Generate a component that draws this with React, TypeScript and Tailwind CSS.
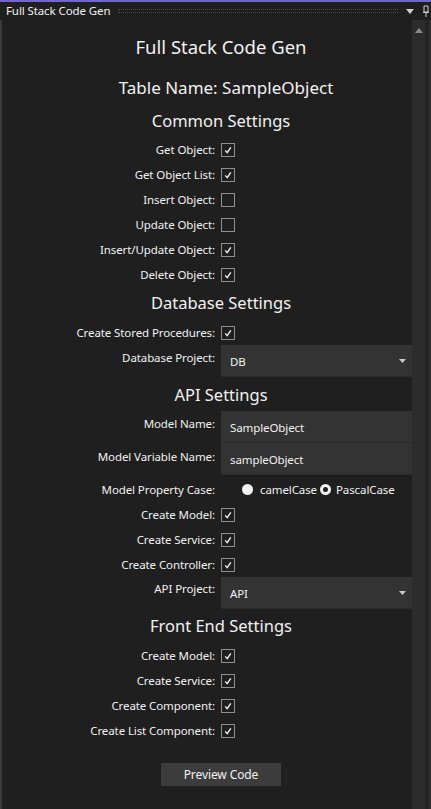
import { ReactNode } from 'react'

const font = { fontFamily: "'Noto Sans', 'Open Sans', sans-serif" }

function Check({ checked }: { checked: boolean }) {
  return (
    <span className="flex h-[14px] w-[14px] items-center justify-center border border-[#8f8f8f] bg-[#1f1f1f]">
      {checked && (
        <svg width="10" height="10" viewBox="0 0 10 10">
          <path d="M2.2 5.4 L4.2 7.6 L7.8 2.4" fill="none" stroke="#f0f0f0" strokeWidth="1.4" />
        </svg>
      )}
    </span>
  )
}

function Row({ label, children }: { label: string; children: ReactNode }) {
  return (
    <div className="grid h-[25px] grid-cols-[213px_1fr] items-center gap-[6px]">
      <span className="text-right">{label}</span>
      <div className="flex items-center">{children}</div>
    </div>
  )
}

function CheckRow({ label, checked = true }: { label: string; checked?: boolean }) {
  return (
    <Row label={label}>
      <Check checked={checked} />
    </Row>
  )
}

function Heading({ children }: { children: ReactNode }) {
  return <div className="h-[24px] pl-[28px] text-center text-[16.5px] leading-[24px] tracking-normal">{children}</div>
}

function Box({ label, value, dropdown, top = 'pt-[5px]' }: { label: string; value: string; dropdown?: boolean; top?: string }) {
  return (
    <div className="grid grid-cols-[213px_1fr] gap-[6px]">
      <span className={`text-right leading-[16px] ${top}`}>{label}</span>
      <div className="flex h-[32px] items-center justify-between border-b border-[#2a2a2a] bg-[#333333] pl-[9px] pr-[6px]">
        <span className="pt-[2px]">{value}</span>
        {dropdown && (
          <svg width="7" height="4" viewBox="0 0 7 4">
            <path d="M0 0 H7 L3.5 4 Z" fill="#c8c8c8" />
          </svg>
        )}
      </div>
    </div>
  )
}

export default function App() {
  return (
    <div
      className="flex h-[809px] w-[431px] flex-col overflow-hidden bg-[#1f1f1f] text-[11.5px] tracking-[-0.1px] text-[#f1f1f1]"
      style={font}
    >
      <div className="h-[2px] bg-[#7160e8]" />
      <div className="flex h-[18px] items-center pl-[6px] pr-[2px]">
        <span className="leading-[14px]">Full Stack Code Gen</span>
        <div className="mx-[8px] h-[4px] flex-1 border-y border-dotted border-[#4a4a4a]" />
        <svg width="8" height="5" viewBox="0 0 8 5" className="mr-[9px]">
          <path d="M0 0 H8 L4 5 Z" fill="#d0d0d0" />
        </svg>
        <svg width="6" height="12" viewBox="0 0 6 12">
          <path d="M1 1 H5 V7 H1 Z M0 7.5 H6 M3 8 V12" fill="none" stroke="#d0d0d0" strokeWidth="1" />
        </svg>
      </div>
      <div className="flex flex-1">
        <div className="w-[2px] bg-[#3a3a3a]" />
        <div className="flex w-[410px] flex-col">
          <div className="mt-[14px] h-[26px] pl-[28px] text-center text-[18.5px] leading-[26px] tracking-normal">Full Stack Code Gen</div>
          <div className="mt-[16px] h-[24px] pl-[38px] text-center text-[17px] leading-[24px] tracking-normal">Table Name: SampleObject</div>
          <div className="mt-[9px]">
            <Heading>Common Settings</Heading>
          </div>
          <div className="mt-[4px]">
            <CheckRow label="Get Object:" />
            <CheckRow label="Get Object List:" />
            <CheckRow label="Insert Object:" checked={false} />
            <CheckRow label="Update Object:" checked={false} />
            <CheckRow label="Insert/Update Object:" />
            <CheckRow label="Delete Object:" />
          </div>
          <div className="mt-[4px]">
            <Heading>Database Settings</Heading>
          </div>
          <div className="mt-[5px]">
            <CheckRow label="Create Stored Procedures:" />
          </div>
          <Box label="Database Project:" value="DB" dropdown />
          <div className="mt-[6px]">
            <Heading>API Settings</Heading>
          </div>
          <div className="mt-[4px]">
            <Box label="Model Name:" value="SampleObject" />
            <Box label="Model Variable Name:" value="sampleObject" top="pt-[6px]" />
          </div>
          <div className="mt-[2px]">
            <Row label="Model Property Case:">
              <div className="flex items-center pl-[21px]">
                <span className="h-[11px] w-[11px] rounded-full bg-[#f5f5f5]" />
                <span className="ml-[7px]">camelCase</span>
                <span className="ml-[3px] h-[11px] w-[11px] rounded-full border-[3px] border-[#f5f5f5] bg-[#1f1f1f]" />
                <span className="ml-[5px]">PascalCase</span>
              </div>
            </Row>
            <CheckRow label="Create Model:" />
            <CheckRow label="Create Service:" />
            <CheckRow label="Create Controller:" />
          </div>
          <Box label="API Project:" value="API" dropdown top="pt-[4px]" />
          <div className="mt-[5px]">
            <Heading>Front End Settings</Heading>
          </div>
          <div className="mt-[5px]">
            <CheckRow label="Create Model:" />
            <CheckRow label="Create Service:" />
            <CheckRow label="Create Component:" />
            <CheckRow label="Create List Component:" />
          </div>
          <div className="mt-[20px] flex justify-center pl-[28px]">
            <button className="h-[23px] w-[120px] bg-[#3c3c3c] text-[12px] text-[#f1f1f1]">Preview Code</button>
          </div>
        </div>
        <div className="flex w-[13px] flex-col items-center bg-[#2c2c2c] pt-[8px]">
          <svg width="8" height="5" viewBox="0 0 8 5">
            <path d="M4 0 L8 5 H0 Z" fill="#8a8a8a" />
          </svg>
        </div>
        <div className="w-[4px] bg-[#252525]" />
        <div className="w-[2px] bg-[#2f2f2f]" />
      </div>
    </div>
  )
}
